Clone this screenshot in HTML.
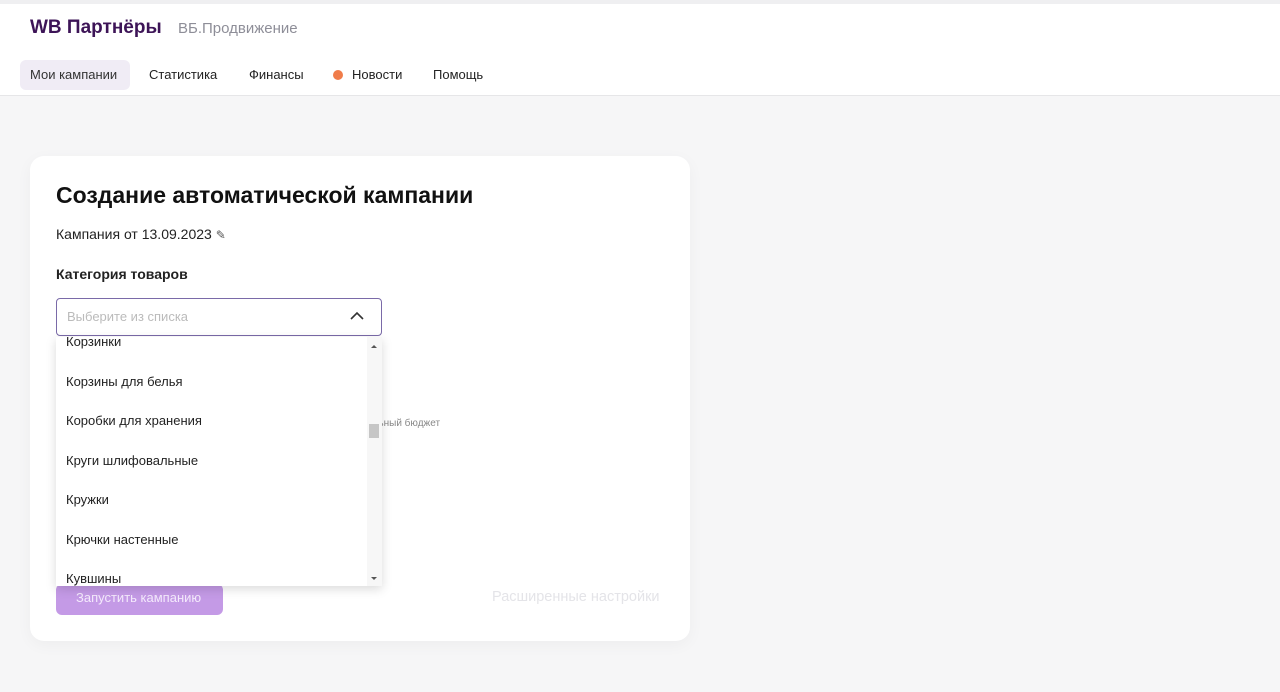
<!DOCTYPE html>
<html><head><meta charset="utf-8"><style>
*{margin:0;padding:0;box-sizing:border-box}
body{width:1280px;height:692px;overflow:hidden;background:#f6f6f7;font-family:"Liberation Sans",sans-serif;color:#1a1a1a;position:relative}
.top{position:absolute;left:0;top:0;width:1280px;height:96px;background:#fff;border-top:4px solid #efeff1;border-bottom:1px solid #e6e6e8}
.a{position:absolute;white-space:nowrap}
.card{position:absolute;left:30px;top:156px;width:660px;height:485px;background:#fff;border-radius:14px;box-shadow:0 4px 16px rgba(0,0,0,.04)}
.dd{position:absolute;left:56px;top:337px;width:326px;height:249px;background:#fff;box-shadow:0 3px 10px rgba(0,0,0,.15);overflow:hidden}
.it{position:absolute;left:10px;font-size:13px;color:#222}
</style></head><body>
<div class="top">
<div class="a" style="left:30px;top:13px;font-size:19px;font-weight:bold;color:#3d1457">WB Партнёры</div>
<div class="a" style="left:178px;top:16px;font-size:15px;color:#8e8e98">ВБ.Продвижение</div>
<div class="a" style="left:20px;top:56px;width:110px;height:30px;background:#f0ecf5;border-radius:6px"></div>
<div class="a" style="left:30px;top:63px;font-size:13px;color:#333">Мои кампании</div>
<div class="a" style="left:149px;top:63px;font-size:13px;color:#222">Статистика</div>
<div class="a" style="left:249px;top:63px;font-size:13px;color:#222">Финансы</div>
<div class="a" style="left:333px;top:66px;width:10px;height:10px;border-radius:50%;background:#f07c4a"></div>
<div class="a" style="left:352px;top:63px;font-size:13px;color:#222">Новости</div>
<div class="a" style="left:433px;top:63px;font-size:13px;color:#222">Помощь</div>
</div>
<div class="card"></div>
<div class="a" style="left:56px;top:182px;font-size:23px;font-weight:bold;color:#111">Создание автоматической кампании</div>
<div class="a" style="left:56px;top:226px;font-size:14px;color:#222">Кампания от 13.09.2023 <span style="font-size:12px;color:#555">✎</span></div>
<div class="a" style="left:56px;top:266px;font-size:14px;font-weight:bold;color:#222">Категория товаров</div>
<div class="a" style="left:56px;top:298px;width:326px;height:38px;border:1px solid #7a6aa8;border-radius:4px;background:#fff"></div>
<div class="a" style="left:67px;top:309px;font-size:13px;color:#bbb">Выберите из списка</div>
<svg class="a" style="left:349px;top:310px" width="16" height="12"><path d="M2 9 L8 3 L14 9" fill="none" stroke="#333" stroke-width="1.6"/></svg>
<div class="a" style="left:367px;top:418px;font-size:10px;color:#888">альный бюджет</div>
<div class="a" style="left:56px;top:584px;width:167px;height:31px;background:#c49ae6;border-radius:6px"></div>
<div class="a" style="left:76px;top:590px;font-size:13px;color:#f4eafc">Запустить кампанию</div>
<div class="a" style="left:492px;top:589px;font-size:14.5px;color:#e4e4e8">Расширенные настройки</div>
<div class="dd">
<div class="it" style="top:-3px">Корзинки</div>
<div class="it" style="top:37px">Корзины для белья</div>
<div class="it" style="top:76px">Коробки для хранения</div>
<div class="it" style="top:116px">Круги шлифовальные</div>
<div class="it" style="top:155px">Кружки</div>
<div class="it" style="top:195px">Крючки настенные</div>
<div class="it" style="top:234px">Кувшины</div>
<div class="a" style="left:311px;top:0;width:15px;height:249px;background:#f7f7f7"></div>
<div class="a" style="left:313px;top:87px;width:10px;height:14px;background:#c6c6c6"></div>
<div class="a" style="left:315px;top:8px;border:3px solid transparent;border-bottom:3px solid #555;border-top:0"></div>
<div class="a" style="left:315px;top:240px;border:3px solid transparent;border-top:3px solid #555;border-bottom:0"></div>
</div>
</body></html>
